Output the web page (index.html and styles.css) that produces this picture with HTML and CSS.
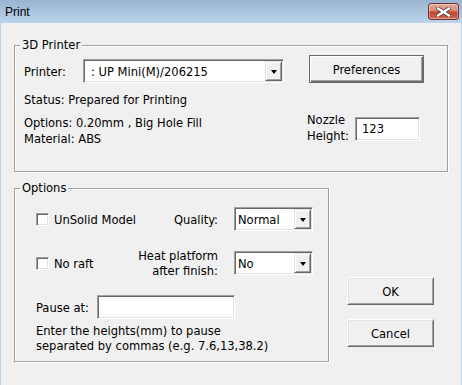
FILE: index.html
```html
<!DOCTYPE html>
<html>
<head>
<meta charset="utf-8">
<link rel="stylesheet" href="styles.css">
</head>
<body>
<div class="window">
  <div class="titlebar">
    <span class="title">Print</span>
    <span class="close">
      <svg width="15" height="10" viewBox="0 0 15 10">
        <path d="M2 1.5 L13 8.5 M2 8.5 L13 1.5" stroke="#5b4a4a" stroke-width="4" stroke-linecap="square"/>
        <path d="M2 1.5 L13 8.5 M2 8.5 L13 1.5" stroke="#ffffff" stroke-width="2.2" stroke-linecap="square"/>
      </svg>
    </span>
  </div>
  <div class="client">
    <div class="group g-printer">
      <span class="legend">3D Printer</span>
      <div class="printer-left">
        <div class="printer-row">
          <span class="lbl-printer">Printer:</span>
          <div class="select sel-printer"><span class="val">: UP Mini(M)/206215</span><span class="dd"><i class="arrow"></i></span></div>
        </div>
        <div class="status">Status: Prepared for Printing</div>
        <div class="info">Options: 0.20mm , Big Hole Fill<br>Material: ABS</div>
      </div>
      <div class="printer-right">
        <div class="btn btn-default btn-pref">Preferences</div>
        <div class="nozzle">
          <span class="lbl-nozzle">Nozzle<br>Height:</span>
          <div class="input in-nozzle">123</div>
        </div>
      </div>
    </div>
    <div class="lower">
      <div class="group g-options">
        <span class="legend">Options</span>
        <div class="opt-row">
          <div class="chk-wrap"><span class="chk"></span><span>UnSolid Model</span></div>
          <span class="qlabel">Quality:</span>
          <div class="select sel-small"><span class="val">Normal</span><span class="dd"><i class="arrow"></i></span></div>
        </div>
        <div class="opt-row row2">
          <div class="chk-wrap"><span class="chk"></span><span>No raft</span></div>
          <span class="qlabel two">Heat platform<br>after finish:</span>
          <div class="select sel-small"><span class="val">No</span><span class="dd"><i class="arrow"></i></span></div>
        </div>
        <div class="pause-row">
          <span class="lbl-pause">Pause at:</span>
          <div class="input in-pause"></div>
        </div>
        <div class="help">Enter the heights(mm) to pause<br>separated by commas (e.g. 7.6,13,38.2)</div>
      </div>
      <div class="buttons">
        <div class="btn btn-ok">OK</div>
        <div class="btn btn-cancel">Cancel</div>
      </div>
    </div>
  </div>
</div>
</body>
</html>
```
FILE: styles.css
```css
html, body {
  margin: 0;
  padding: 0;
  width: 462px;
  height: 385px;
  overflow: hidden;
  background: #f0f0f0;
}
body {
  font-family: "DejaVu Sans Condensed", "DejaVu Sans", sans-serif;
  font-stretch: condensed;
  font-size: 12.8px;
  color: #000;
}
.window {
  width: 462px;
  height: 385px;
  display: flex;
  flex-direction: column;
}
.titlebar {
  height: 23px;
  flex: none;
  background: linear-gradient(#99b4d1, #bcd4ec);
  display: flex;
  align-items: center;
  justify-content: space-between;
  padding: 0 3px 0 5px;
}
.title {
  font-family: "Liberation Sans", sans-serif;
  font-stretch: normal;
  font-size: 12px;
  line-height: 16px;
}
.close {
  width: 31px;
  height: 17px;
  box-sizing: border-box;
  border: 1px solid #6d3030;
  border-radius: 3px;
  background: linear-gradient(#e6ab9b 0%, #d98a74 45%, #c24a2f 52%, #c9583c 85%, #d67560 100%);
  box-shadow: inset 0 0 0 1px rgba(255,255,255,0.35);
  display: flex;
  align-items: center;
  justify-content: center;
}
.close svg { display: block; }
.client {
  flex: 1;
  background: #f0f0f0;
  border-left: 1px solid #bcd3ea;
  border-right: 1px solid #bcd3ea;
  padding: 22px 13px 0 13px;
}
.group {
  position: relative;
  box-sizing: border-box;
  border: 1px solid #a0a0a0;
  box-shadow: inset 1px 1px 0 #fff, 1px 1px 0 #fff;
}
.legend {
  position: absolute;
  top: -9px;
  left: 5px;
  padding: 0 2px;
  line-height: 16px;
  background: #f0f0f0;
}
.g-printer {
  height: 127px;
  display: flex;
  padding: 9px 0 0 9px;
}
.printer-left {
  width: 283px;
  padding-top: 4px;
}
.printer-row {
  display: flex;
  align-items: center;
  height: 24px;
}
.lbl-printer { width: 59px; }
.select, .input {
  box-sizing: border-box;
  height: 24px;
  background: #fff;
  border: 1px solid;
  border-color: #a0a0a0 #fff #fff #a0a0a0;
  box-shadow: inset 1px 1px 0 #696969, inset -1px -1px 0 #e3e3e3;
  padding: 1px;
}
.select {
  display: flex;
  align-items: center;
}
.select .val {
  flex: 1;
  padding-left: 6px;
  white-space: nowrap;
  overflow: hidden;
}
.sel-printer { width: 201px; }
.dd {
  width: 17px;
  height: 100%;
  box-sizing: border-box;
  background: #f0f0f0;
  border: 1px solid;
  border-color: #e3e3e3 #696969 #696969 #e3e3e3;
  box-shadow: inset 1px 1px 0 #fff, inset -1px -1px 0 #a0a0a0;
  display: flex;
  align-items: center;
  justify-content: center;
}
.arrow {
  display: block;
  width: 0;
  height: 0;
  border-left: 3.5px solid transparent;
  border-right: 3.5px solid transparent;
  border-top: 4px solid #000;
  margin-top: 1px;
}
.status {
  margin-top: 9px;
  line-height: 16px;
}
.info {
  margin-top: 7px;
  line-height: 16px;
}
.printer-right {
  display: flex;
  flex-direction: column;
}
.btn {
  box-sizing: border-box;
  height: 28px;
  background: #f0f0f0;
  display: flex;
  align-items: center;
  justify-content: center;
  border: 1px solid;
  border-color: #fff #696969 #696969 #fff;
  box-shadow: inset 1px 1px 0 #e3e3e3, inset -1px -1px 0 #a0a0a0;
}
.btn-default {
  border-color: #6a6a6a;
  box-shadow: inset 1px 1px 0 #fff, inset -1px -1px 0 #696969, inset -2px -2px 0 #a0a0a0;
}
.btn-pref {
  width: 115px;
  margin-left: 2px;
}
.nozzle {
  display: flex;
  align-items: flex-start;
  margin-top: 29px;
}
.lbl-nozzle {
  width: 48px;
  line-height: 16px;
}
.in-nozzle {
  width: 65px;
  margin-top: 5px;
  padding-left: 6px;
  line-height: 20px;
}
.lower {
  display: flex;
  margin-top: 16px;
}
.g-options {
  width: 315px;
  height: 174px;
  padding: 18px 15px 0 21px;
}
.opt-row {
  display: flex;
  align-items: center;
  height: 24px;
}
.row2 { margin-top: 20px; }
.chk-wrap {
  display: flex;
  align-items: center;
  gap: 5px;
}
.chk {
  width: 13px;
  height: 13px;
  box-sizing: border-box;
  background: #fff;
  border: 1px solid;
  border-color: #a0a0a0 #fff #fff #a0a0a0;
  box-shadow: inset 1px 1px 0 #696969, inset -1px -1px 0 #e3e3e3;
}
.qlabel {
  flex: 1;
  text-align: right;
  line-height: 15px;
}
.sel-small {
  width: 79px;
  margin-left: 16px;
}
.sel-small .val { padding-left: 2px; }
.pause-row {
  display: flex;
  align-items: center;
  margin-top: 20px;
}
.lbl-pause { width: 61px; }
.in-pause {
  width: 138px;
}
.help {
  margin-top: 4px;
  line-height: 15px;
}
.buttons {
  display: flex;
  flex-direction: column;
  margin-left: 18px;
  width: 87px;
}
.btn-ok { margin-top: 89px; }
.btn-cancel { margin-top: 14px; }
```
